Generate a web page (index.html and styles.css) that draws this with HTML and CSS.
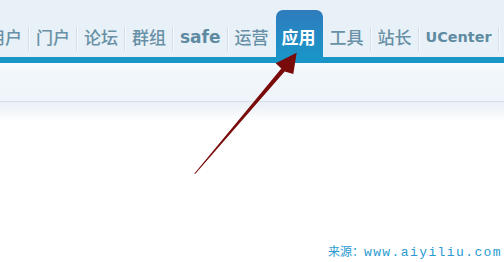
FILE: index.html
```html
<!DOCTYPE html>
<html>
<head>
<meta charset="utf-8">
<link rel="stylesheet" href="styles.css">
</head>
<body>
<div class="page">
  <div class="header">
    <nav class="nav">
      <a class="item">用户</a><span class="sep"></span>
      <a class="item">门户</a><span class="sep"></span>
      <a class="item">论坛</a><span class="sep"></span>
      <a class="item">群组</a><span class="sep"></span>
      <a class="item latin safe">safe</a><span class="sep"></span>
      <a class="item before-active">运营</a>
      <a class="item active">应用</a>
      <a class="item">工具</a><span class="sep"></span>
      <a class="item">站长</a><span class="sep"></span>
      <a class="item latin uc">UCenter</a><span class="sep"></span>
    </nav>
  </div>
  <div class="bar"></div>
  <div class="subbar"></div>
  <div class="content">
    <div class="source">来源：<span class="url">www.aiyiliu.com</span></div>
  </div>
  <svg class="arrow" width="504" height="262" viewBox="0 0 504 262">
    <polygon points="194,174 281.3,68.6 275.7,63.3 296.7,52.7 293.3,74 284.7,71.4 195.6,173.6" fill="#7a0b0b"/>
  </svg>
</div>
</body>
</html>
```
FILE: styles.css
```css
html, body {
  margin: 0;
  padding: 0;
  background: #ffffff;
}
.page {
  position: relative;
  width: 504px;
  height: 262px;
  overflow: hidden;
  display: flex;
  flex-direction: column;
}
.header {
  height: 57px;
  background: #e9f1f8;
  display: flex;
  align-items: flex-end;
}
.nav {
  display: flex;
  align-items: flex-end;
  margin-left: -19px;
  height: 47px;
}
.item {
  height: 47px;
  box-sizing: border-box;
  padding: 6px 6px 0 7px;
  display: flex;
  align-items: center;
  font-family: "Noto Sans CJK SC", sans-serif;
  font-weight: 500;
  font-size: 17px;
  color: #6890a6;
  text-decoration: none;
  white-space: nowrap;
}
.latin {
  font-family: "DejaVu Sans", sans-serif;
  font-weight: 700;
  color: #5f8ba2;
}
.safe {
  font-size: 17px;
  padding-right: 6px;
}
.uc {
  font-size: 14.4px;
}
.sep {
  width: 1px;
  height: 24px;
  margin-bottom: 6px;
  background: #d2dfe9;
  box-shadow: 1px 0 0 #f6fafd;
}
.before-active {
  padding-right: 7px;
}
.active {
  background: linear-gradient(#2f7cbd, #1a95c8);
  border-radius: 7px 7px 0 0;
  color: #ffffff;
  font-weight: 700;
  width: 47px;
  padding-left: 6px;
  padding-right: 6px;
}
.active + .item {
  padding-left: 7px;
}
.bar {
  height: 6px;
  background: #1995c8;
}
.subbar {
  height: 38px;
  background: linear-gradient(#f8fbfd, #f0f6fa 30%, #eff5fa);
  border-bottom: 1px solid #d6e0e8;
}
.content {
  flex: 1;
  background: linear-gradient(#e9f0f6, #ffffff 20px);
  display: flex;
  align-items: flex-end;
  justify-content: flex-end;
}
.source {
  font-family: "Noto Sans CJK SC", sans-serif;
  font-size: 12px;
  color: #2a9bd2;
  padding: 0 2px 1px 0;
  line-height: 16px;
}
.url {
  font-family: "Liberation Mono", monospace;
  font-size: 13px;
  letter-spacing: 1.4px;
}
.arrow {
  position: absolute;
  left: 0;
  top: 0;
  pointer-events: none;
}
```
